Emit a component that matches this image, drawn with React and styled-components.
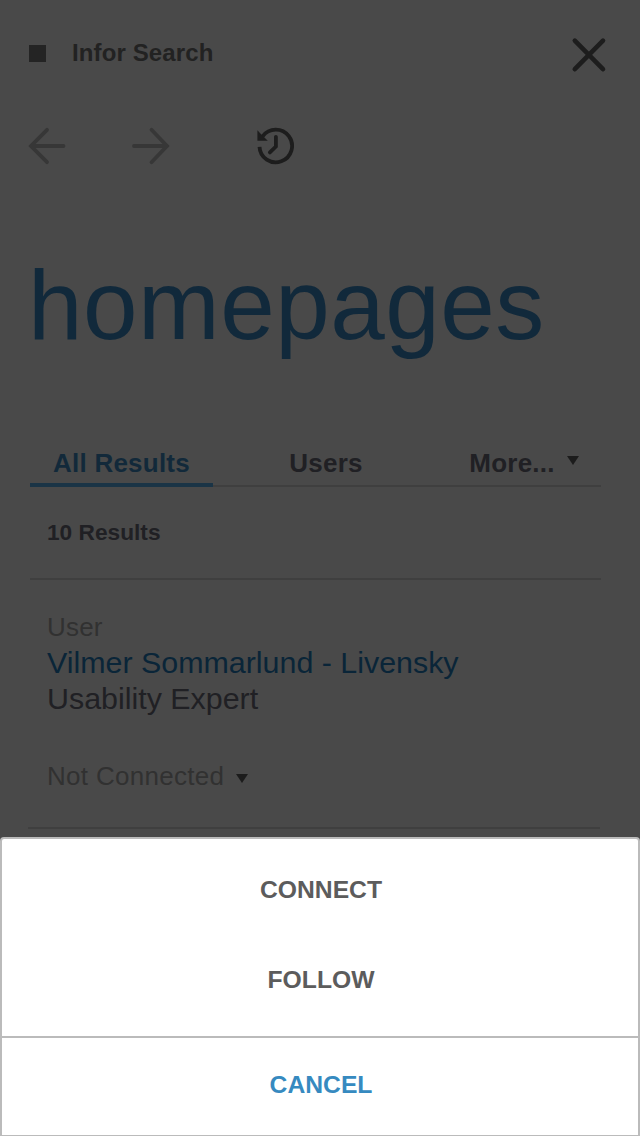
import React from "react";
import styled, { createGlobalStyle } from "styled-components";

const Global = createGlobalStyle`
  * { box-sizing: border-box; }
  body {
    margin: 0;
    background: #494949;
    font-family: "Liberation Sans", Arial, sans-serif;
  }
`;

const Screen = styled.main`
  position: relative;
  width: 640px;
  height: 1136px;
  overflow: hidden;
  background: #494949;
  color: #202024;
`;

const Header = styled.header`
  display: flex;
  align-items: center;
  height: 108px;
  padding: 0 31px 0 29px;
`;

const Mark = styled.span`
  width: 17px;
  height: 17px;
  margin-bottom: 2px;
  background: #242424;
`;

const Title = styled.h1`
  flex: 1;
  margin: 0 0 3px 26px;
  font-size: 24px;
  line-height: 28px;
  letter-spacing: 0.12px;
  color: #222222;
`;

const IconButton = styled.button`
  display: block;
  padding: 0;
  border: 0;
  background: none;
  color: ${(p) => (p.$muted ? "#373737" : "#1d1d1d")};
  svg { display: block; }
`;

const Toolbar = styled.nav`
  display: flex;
  align-items: center;
  height: 76px;
  padding-left: 26px;
`;

const ToolSlot = styled.div`
  width: ${(p) => p.$width}px;
`;

const Query = styled.h2`
  margin: 65px 0 0 28px;
  height: 175px;
  font-size: 98px;
  font-weight: 400;
  line-height: 112px;
  letter-spacing: 0.5px;
  color: #11293b;
`;

const Tabs = styled.div`
  display: flex;
  margin: 0 39px 0 30px;
  height: 63px;
  border-bottom: 2px solid #3f3f3f;
`;

const Tab = styled.div`
  display: flex;
  flex: none;
  align-items: flex-start;
  justify-content: center;
  width: ${(p) => p.$width}px;
  height: 63px;
  padding-top: 24px;
  font-size: 26px;
  font-weight: 700;
  line-height: 30px;
  letter-spacing: 0.22px;
  color: ${(p) => (p.$active ? "#12293a" : "#202024")};
  border-bottom: ${(p) => (p.$active ? "4px solid #1a3446" : "0")};
`;

const Caret = styled.span`
  width: 0;
  height: 0;
  margin: ${(p) => p.$margin};
  border: 6px solid transparent;
  border-top: 9px solid #1c1c1c;
  border-bottom: 0;
`;

const Summary = styled.div`
  margin: 0 39px 0 30px;
  padding: 32px 17px 0;
  height: 93px;
  border-bottom: 2px solid #3f3f3f;
  font-size: 22.7px;
  font-weight: 700;
  line-height: 27px;
`;

const Result = styled.article`
  margin: 0 40px 0 28px;
  padding: 31px 0 0 19px;
  height: 249px;
  border-bottom: 2px solid #3f3f3f;
`;

const Kind = styled.div`
  height: 33px;
  font-size: 26px;
  line-height: 32px;
  letter-spacing: 0.2px;
  color: #313131;
`;

const Line = styled.div`
  font-size: 30.4px;
  line-height: 36px;
  color: ${(p) => (p.$link ? "#0a2538" : "#202024")};
`;

const Status = styled.div`
  display: flex;
  margin-top: 45px;
  font-size: 26px;
  line-height: 30px;
  letter-spacing: 0.3px;
  color: #313131;
`;

const Sheet = styled.section`
  position: absolute;
  left: 0;
  top: 837px;
  width: 640px;
  height: 300px;
  border: 2px solid #bbbbbb;
  border-radius: 4px 4px 0 0;
  background: #ffffff;
`;

const Actions = styled.div`
  height: 199px;
  padding-top: 6px;
  border-bottom: 2px solid #bbbbbb;
`;

const Action = styled.button`
  display: block;
  width: 100%;
  height: ${(p) => p.$height || 90}px;
  padding: 0 0 0 2px;
  border: 0;
  background: none;
  font: 700 24.7px/30px "Liberation Sans", Arial, sans-serif;
  color: ${(p) => (p.$primary ? "#368ac0" : "#5c5c5c")};
`;

const ArrowIcon = ({ right }) => (
  <svg width="44" height="40" viewBox="0 0 44 40" fill="none" stroke="currentColor" strokeWidth="3.8" strokeLinecap="round">
    {right ? (
      <path d="M6 20H39M23.5 3.8L39 20L23.5 36.2" />
    ) : (
      <path d="M37.5 20H5M21 3.8L5 20L21 36.2" />
    )}
  </svg>
);

const HistoryIcon = () => (
  <svg width="40" height="40" viewBox="0 0 40 40" fill="none" stroke="currentColor">
    <path d="M4.5 20.8A16.3 16.3 0 1 0 7.6 10.4" strokeWidth="3.8" />
    <path d="M2.4 4.2L6.6 8.8L12.8 14.8H2.4Z" fill="currentColor" stroke="none" />
    <path d="M20.9 10.8V20.5L14.9 26.4" strokeWidth="3.8" strokeLinecap="round" />
  </svg>
);

const CloseIcon = () => (
  <svg width="40" height="40" viewBox="0 0 40 40" fill="none" stroke="currentColor" strokeWidth="4.6" strokeLinecap="round">
    <path d="M5.8 6.7L34 35.2M34 6.7L5.8 35.2" />
  </svg>
);

export default function App() {
  return (
    <Screen>
      <Global />
      <Header>
        <Mark />
        <Title>Infor Search</Title>
        <IconButton aria-label="Close"><CloseIcon /></IconButton>
      </Header>
      <Toolbar>
        <ToolSlot $width={102}><IconButton $muted aria-label="Back"><ArrowIcon /></IconButton></ToolSlot>
        <ToolSlot $width={127}><IconButton $muted aria-label="Forward"><ArrowIcon right /></IconButton></ToolSlot>
        <IconButton aria-label="History"><HistoryIcon /></IconButton>
      </Toolbar>
      <Query>homepages</Query>
      <Tabs>
        <Tab $active $width={183}>All Results</Tab>
        <Tab $width={226}>Users</Tab>
        <Tab $width={170}>More...<Caret $margin="8px 0 0 12px" /></Tab>
      </Tabs>
      <Summary>10 Results</Summary>
      <Result>
        <Kind>User</Kind>
        <Line $link>Vilmer Sommarlund - Livensky</Line>
        <Line>Usability Expert</Line>
        <Status>Not Connected<Caret $margin="13px 0 0 12px" /></Status>
      </Result>
      <Sheet>
        <Actions>
          <Action>CONNECT</Action>
          <Action>FOLLOW</Action>
        </Actions>
        <Action $primary $height={94}>CANCEL</Action>
      </Sheet>
    </Screen>
  );
}
